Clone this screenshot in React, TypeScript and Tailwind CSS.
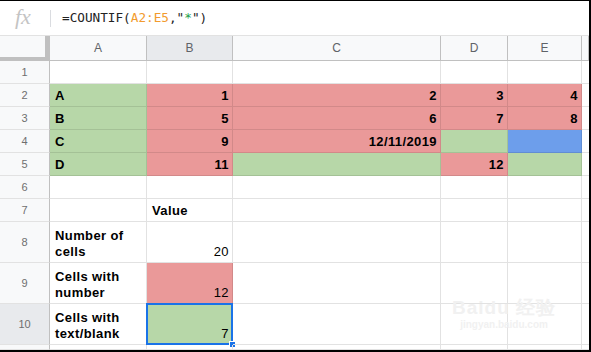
import React from "react";

const COLS = "grid grid-cols-[50px_97px_86px_208px_67px_74px_7px]";
const G = "bg-[#b7d7a8]";
const R = "bg-[#ea9999]";
const B = "bg-[#6d9eeb]";

type Cell = {
  t?: React.ReactNode;
  bg?: string;
  bold?: boolean;
  right?: boolean;
  sel?: boolean;
};

type Row = { n: number; h: string; cells: Cell[]; active?: boolean };

const rows: Row[] = [
  { n: 1, h: "h-[23px]", cells: [{}, {}, {}, {}, {}] },
  {
    n: 2,
    h: "h-[23px]",
    cells: [
      { t: "A", bg: G, bold: true },
      { t: "1", bg: R, bold: true, right: true },
      { t: "2", bg: R, bold: true, right: true },
      { t: "3", bg: R, bold: true, right: true },
      { t: "4", bg: R, bold: true, right: true },
    ],
  },
  {
    n: 3,
    h: "h-[23px]",
    cells: [
      { t: "B", bg: G, bold: true },
      { t: "5", bg: R, bold: true, right: true },
      { t: "6", bg: R, bold: true, right: true },
      { t: "7", bg: R, bold: true, right: true },
      { t: "8", bg: R, bold: true, right: true },
    ],
  },
  {
    n: 4,
    h: "h-[23px]",
    cells: [
      { t: "C", bg: G, bold: true },
      { t: "9", bg: R, bold: true, right: true },
      { t: "12/11/2019", bg: R, bold: true, right: true },
      { bg: G },
      { bg: B },
    ],
  },
  {
    n: 5,
    h: "h-[23px]",
    cells: [
      { t: "D", bg: G, bold: true },
      { t: "11", bg: R, bold: true, right: true },
      { bg: G },
      { t: "12", bg: R, bold: true, right: true },
      { bg: G },
    ],
  },
  { n: 6, h: "h-[23px]", cells: [{}, {}, {}, {}, {}] },
  { n: 7, h: "h-[23px]", cells: [{}, { t: "Value", bold: true }, {}, {}, {}] },
  {
    n: 8,
    h: "h-[41px]",
    cells: [
      { t: <>Number of<br />cells</>, bold: true },
      { t: "20", right: true },
      {},
      {},
      {},
    ],
  },
  {
    n: 9,
    h: "h-[41px]",
    cells: [
      { t: <>Cells with<br />number</>, bold: true },
      { t: "12", bg: R, right: true },
      {},
      {},
      {},
    ],
  },
  {
    n: 10,
    h: "h-[41px]",
    active: true,
    cells: [
      { t: <>Cells with<br />text/blank</>, bold: true },
      { t: "7", bg: G, right: true, sel: true },
      {},
      {},
      {},
    ],
  },
  { n: 11, h: "h-[5px]", cells: [{}, {}, {}, {}, {}] },
];

function GridCell({ c }: { c: Cell }) {
  return (
    <div
      className={`relative flex items-end pb-[2px] border-r border-b text-[13px] leading-[16px] tracking-[0.4px] text-black ${
        c.right ? "justify-end pr-[3px] text-right" : "pl-[5px]"
      } ${c.bg ? c.bg + " border-black/10" : "border-[#e2e2e2]"} ${c.bold ? "font-bold" : ""}`}
    >
      {c.t && <span>{c.t}</span>}
      {c.sel && (
        <>
          <div className="absolute -left-px -top-px -right-px -bottom-px border-2 border-[#1a73e8]" />
          <div className="absolute -right-[4px] -bottom-[4px] w-[7px] h-[7px] bg-[#1a73e8] border border-white" />
        </>
      )}
    </div>
  );
}

export default function App() {
  return (
    <div className="w-[591px] h-[352px] overflow-hidden bg-white border-t border-r-2 border-b-2 border-black font-['Liberation_Sans',Arial,sans-serif] relative">
      {/* formula bar */}
      <div className="h-[34px] flex items-center">
        <span className="w-[50px] pl-[15px] font-['Liberation_Serif',serif] italic text-[22px] leading-none text-[#c4c4c4] -mt-[2px]">
          fx
        </span>
        <div className="w-px h-[17px] bg-[#dadce0]" />
        <span className="ml-[11px] font-['DejaVu_Sans_Mono',monospace] text-[12.7px] text-[#222] -mt-[1px]">
          =COUNTIF(<span className="text-[#f29b2e]">A2:E5</span>,"
          <span className="text-[#21a04a]">*</span>")
        </span>
      </div>

      {/* column headers */}
      <div className={`${COLS} h-[26px] bg-[#f8f9fa] text-[12px] text-[#5f6368] border-t border-[#e2e2e2]`}>
        <div className="border-r-[5px] border-b-[4px] border-[#c0c0c0]" />
        {["A", "B", "C", "D", "E", ""].map((l, i) => (
          <div
            key={i}
            className={`flex items-center justify-center border-b border-r border-[#c0c0c0] ${
              l === "B" ? "bg-[#e8eaed]" : ""
            }`}
          >
            {l}
          </div>
        ))}
      </div>

      {rows.map((r) => (
        <div key={r.n} className={`${COLS} ${r.h}`}>
          <div
            className={`flex items-center justify-center text-[11px] text-[#6f6f6f] border-r border-r-[#c0c0c0] border-b border-b-[#e2e2e2] ${
              r.active ? "bg-[#e8eaed]" : "bg-[#f8f9fa]"
            }`}
          >
            {r.n < 11 ? r.n : ""}
          </div>
          {r.cells.map((c, i) => (
            <GridCell key={i} c={c} />
          ))}
          <div className="border-b border-[#e2e2e2]" />
        </div>
      ))}

      {/* watermark */}
      <div className="absolute left-[452px] top-[296px] flex flex-col items-center text-[#f1f1f1] pointer-events-none">
        <span className="text-[19px] font-bold leading-[22px] tracking-[1px]">Baidu 经验</span>
        <span className="text-[10px] font-bold leading-[12px]">jingyan.baidu.com</span>
      </div>
    </div>
  );
}
